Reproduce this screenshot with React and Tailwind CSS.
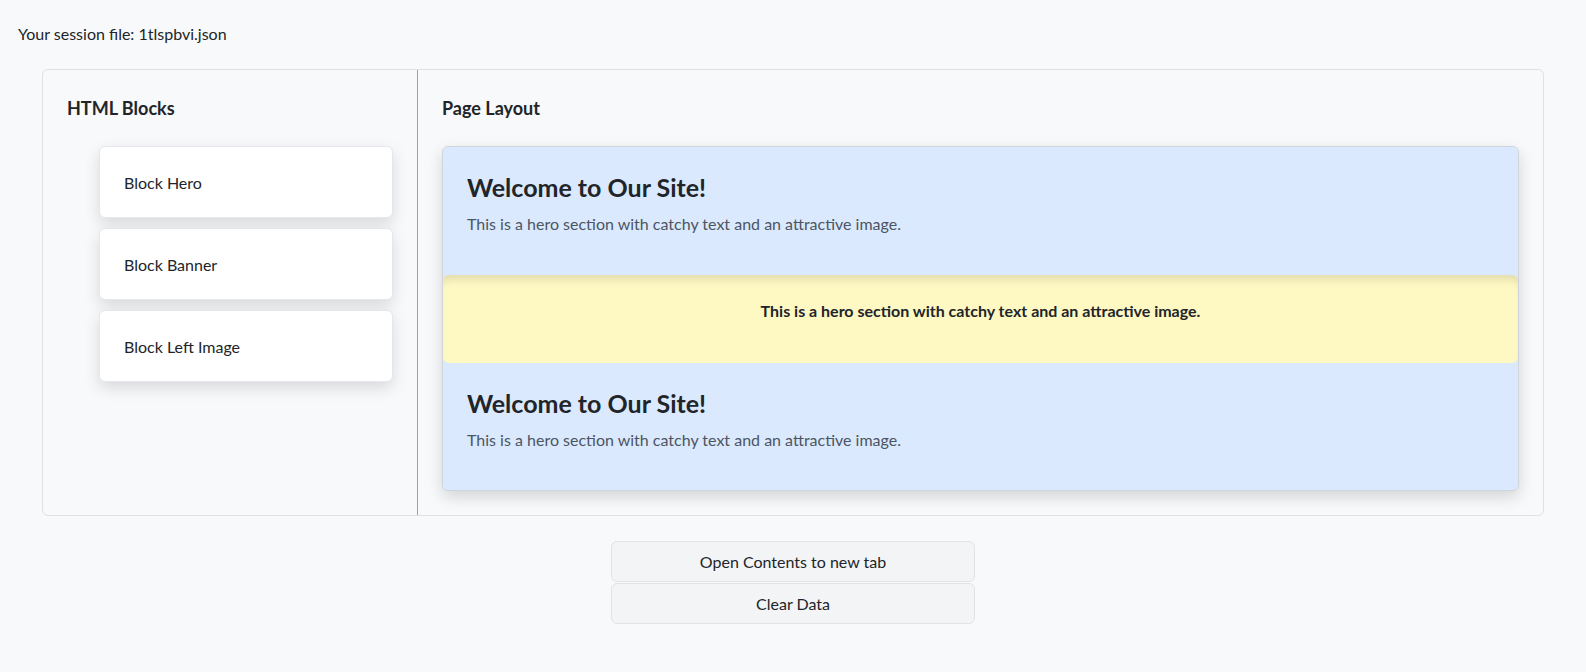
import React from "react";

const blocks = ["Block Hero", "Block Banner", "Block Left Image"];

function Hero({ last }) {
  return (
    <div className={`${last ? "h-[127px]" : "h-[128px]"} bg-[#dbe9fe] px-6 pt-[26px]`}>
      <h2 className="mb-[10px] text-[25px] font-bold leading-[29px] text-[#212529]">
        Welcome to Our Site!
      </h2>
      <p className="text-base leading-6 text-[#4b5563]">
        This is a hero section with catchy text and an attractive image.
      </p>
    </div>
  );
}

function Banner() {
  return (
    <div className="h-[88px] rounded-md bg-[#fef8c3] px-6 pt-6 text-center shadow-[inset_0_10px_10px_-6px_rgba(0,0,0,0.12)]">
      <p className="text-base font-bold leading-6 text-[#212529]">
        This is a hero section with catchy text and an attractive image.
      </p>
    </div>
  );
}

export default function App() {
  return (
    <div className="min-h-screen bg-[#f8f9fa] font-['Lato',sans-serif] text-[#212529]">
      <p className="pl-[18px] pt-[22px] text-base leading-6">Your session file: 1tlspbvi.json</p>

      <div className="mx-[42px] mt-[23px] flex h-[447px] rounded-md border border-[#dee2e6]">
        <div className="w-1/4 border-r border-[#9ea1ad] px-6 pt-6">
          <h5 className="text-[18px] font-bold leading-[29px]">HTML Blocks</h5>
          <ul className="mt-[23px] flex flex-col gap-[10px] pl-8">
            {blocks.map((b) => (
              <li
                key={b}
                className="flex h-[72px] items-center rounded-md border border-[#e5e7eb] bg-white px-6 pt-[2px] text-base shadow-[0_6px_16px_rgba(0,0,0,0.13)]"
              >
                {b}
              </li>
            ))}
          </ul>
        </div>

        <div className="flex-1 px-6 pt-6">
          <h5 className="text-[18px] font-bold leading-[29px]">Page Layout</h5>
          <div className="mt-[23px] overflow-hidden rounded-md border border-[#d1d5db] bg-[#dbe9fe] shadow-[0_6px_16px_rgba(0,0,0,0.15)]">
            <Hero />
            <Banner />
            <Hero last />
          </div>
        </div>
      </div>

      <div className="mx-auto mt-[25px] flex w-[364px] flex-col gap-[1px]">
        <button className="h-[41px] rounded-md border border-[#e2e3e7] bg-[#f3f4f6] text-base text-[#212529]">
          Open Contents to new tab
        </button>
        <button className="h-[41px] rounded-md border border-[#e2e3e7] bg-[#f3f4f6] text-base text-[#212529]">
          Clear Data
        </button>
      </div>
    </div>
  );
}
